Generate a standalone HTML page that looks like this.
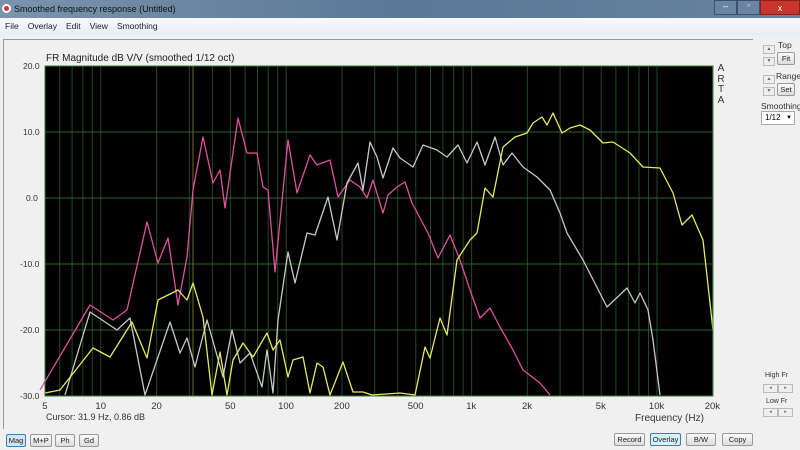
<!DOCTYPE html>
<html><head><meta charset="utf-8"><style>
*{margin:0;padding:0;box-sizing:border-box}
body{width:800px;height:450px;overflow:hidden;background:#f0f0f0;font-family:"Liberation Sans",sans-serif;position:relative}
.abs{position:absolute}
#title{left:0;top:0;width:800px;height:18px;background:linear-gradient(90deg,#7b93ad,#5a7898 50%,#6782a0);font-size:9px;color:#111;line-height:18px;padding-left:14px}
#menu{left:0;top:18px;width:800px;height:17px;background:linear-gradient(#f7f9fc,#e8edf5);font-size:8.5px;line-height:16px;color:#222}
#menu span{margin-left:5px;margin-right:4px}
.btn{position:absolute;height:13px;border:1px solid #999;background:linear-gradient(#fafafa,#ddd);font-size:7.5px;text-align:center;line-height:11px;color:#222;border-radius:2px}
.lbl{position:absolute;font-size:8.5px;color:#333}
.sm{position:absolute;width:12px;height:9px;border:1px solid #bbb;background:#eee;font-size:5px;text-align:center;line-height:7px;color:#666}
</style></head><body>
<div id="title" class="abs">Smoothed frequency response (Untitled)</div>
<div class="abs" style="left:2px;top:4px;width:9px;height:9px;border-radius:50%;background:#d33;border:2px solid #fff"></div>
<div class="abs" style="left:714px;top:0;width:23px;height:15px;background:#6a84a2;border:1px solid #3b526c;color:#fff;font-size:9px;text-align:center">–</div>
<div class="abs" style="left:737px;top:0;width:23px;height:15px;background:#6a84a2;border:1px solid #3b526c;color:#fff;font-size:8px;text-align:center">▫</div>
<div class="abs" style="left:760px;top:0;width:40px;height:15px;background:#c8352a;border:1px solid #8a2018;color:#fff;font-size:9px;text-align:center;line-height:14px">x</div>
<div id="menu" class="abs"><span>File</span><span>Overlay</span><span>Edit</span><span>View</span><span>Smoothing</span></div>
<div class="abs" style="left:3px;top:39px;width:750px;height:390px;border-left:1px solid #999;border-top:1px solid #999"></div>
<div class="lbl" style="left:46px;top:53px;font-size:10px;color:#222">FR Magnitude dB V/V (smoothed 1/12 oct)</div>
<div class="abs" style="left:716px;top:64px;font-size:10px;line-height:10.5px;color:#333;width:10px;text-align:center">A<br>R<br>T<br>A</div>
<div class="lbl" style="left:23px;top:61px">20.0</div>
<div class="lbl" style="left:23px;top:127px">10.0</div>
<div class="lbl" style="left:26px;top:193px">0.0</div>
<div class="lbl" style="left:20px;top:259px">-10.0</div>
<div class="lbl" style="left:20px;top:325px">-20.0</div>
<div class="lbl" style="left:20px;top:391px">-30.0</div>
<div id="xl"></div>
<div class="lbl" style="left:635px;top:413px;font-size:10px">Frequency (Hz)</div>
<div class="lbl" style="left:46px;top:412px;font-size:9px">Cursor: 31.9 Hz, 0.86 dB</div>
<svg class="abs" style="left:0;top:0" width="800" height="450">
<rect x="45" y="66" width="668" height="330" fill="#000"/>
<g id="g"></g>
<line x1="193" y1="66" x2="193" y2="396" stroke="#6b6a2a" stroke-width="1"/>
<g fill="none" stroke-width="1.3" stroke-linejoin="round">
<polyline stroke="#e050a0" points="40,390 90,305 113,320 127,310 147,222 158,263 168,238 178,305 187,257 193,190 203,137 213,183 220,170 225,208 238,118 247,153 257,153 263,187 268,190 275,272 288,140 297,193 310,155 317,165 330,160 338,197 350,180 360,187 367,198 373,180 383,213 388,195 397,187 405,182 412,203 428,233 438,258 450,235 460,260 470,290 480,318 490,308 500,327 513,350 523,370 540,383 550,395"/>
<polyline stroke="#c8c8c8" points="65,395 90,312 117,330 130,318 145,395 170,322 180,353 187,338 195,367 207,320 223,377 232,330 240,363 250,353 262,387 267,350 273,393 278,320 288,252 295,283 307,233 315,235 328,197 337,240 347,183 358,163 363,190 370,142 377,157 383,178 393,148 400,158 413,167 423,145 437,150 447,157 458,145 467,163 477,142 485,165 495,137 503,165 512,153 523,167 537,177 550,190 560,213 567,233 583,260 607,307 627,288 635,303 640,293 648,310 653,340 660,395"/>
<polyline stroke="#e8e860" points="45,393 60,390 93,348 110,357 132,322 147,358 158,300 178,290 187,300 193,283 203,317 212,395 220,352 227,395 233,360 243,343 253,357 267,333 273,350 280,340 288,377 293,360 303,357 310,393 317,363 323,367 330,395 343,362 353,392 363,392 372,395 400,393 415,395 425,347 430,358 440,318 447,335 457,260 470,240 477,233 485,188 493,197 503,147 515,137 527,133 533,123 542,117 547,125 553,113 562,133 570,128 580,125 590,130 603,143 613,142 630,153 643,167 660,168 673,193 682,225 692,215 703,240 713,330"/>
</g>
<rect x="45" y="66" width="668" height="330" fill="none" stroke="#3a7a3a"/>
</svg>
<div class="lbl" style="left:778px;top:40px">Top</div>
<div class="sm" style="left:763px;top:45px">▲</div><div class="sm" style="left:763px;top:57px">▼</div>
<div class="btn" style="left:777px;top:52px;width:18px">Fit</div>
<div class="lbl" style="left:776px;top:71px">Range</div>
<div class="sm" style="left:763px;top:75px">▲</div><div class="sm" style="left:763px;top:87px">▼</div>
<div class="btn" style="left:777px;top:83px;width:18px">Set</div>
<div class="lbl" style="left:761px;top:101px">Smoothing</div>
<div class="abs" style="left:761px;top:111px;width:34px;height:14px;border:1px solid #aaa;background:#fff;font-size:8px;line-height:12px;padding-left:3px">1/12 <span style="float:right;font-size:6px;margin-right:2px">▼</span></div>
<div class="lbl" style="left:765px;top:372px;font-size:7px">High Fr</div>
<div class="sm" style="left:763px;top:384px;width:15px">◂</div><div class="sm" style="left:778px;top:384px;width:15px">▸</div>
<div class="lbl" style="left:766px;top:398px;font-size:7px">Low Fr</div>
<div class="sm" style="left:763px;top:408px;width:15px">◂</div><div class="sm" style="left:778px;top:408px;width:15px">▸</div>
<div class="btn" style="left:6px;top:434px;width:20px;background:#cfe6f8;border-color:#3c7fb1">Mag</div>
<div class="btn" style="left:30px;top:434px;width:22px">M+P</div>
<div class="btn" style="left:55px;top:434px;width:20px">Ph</div>
<div class="btn" style="left:79px;top:434px;width:20px">Gd</div>
<div class="btn" style="left:614px;top:433px;width:31px">Record</div>
<div class="btn" style="left:650px;top:433px;width:31px;background:#dbeefb;border-color:#3c7fb1">Overlay</div>
<div class="btn" style="left:686px;top:433px;width:30px">B/W</div>
<div class="btn" style="left:722px;top:433px;width:31px">Copy</div>
<script>
var g=document.getElementById('g'),s='',xl='';
function X(f){return 45+185.4*Math.log10(f/5);}
var fs=[];
[1,10,100,1000,10000].forEach(function(d){for(var m=1;m<10;m++){var f=m*d;if(f>=5&&f<=20000)fs.push(f);}});
fs.push(20000);
fs.forEach(function(f){var x=X(f).toFixed(1);s+='<line x1="'+x+'" y1="66" x2="'+x+'" y2="396" stroke="#1e4a1e"/>';});
for(var i=1;i<5;i++){var y=66+66*i;s+='<line x1="45" y1="'+y+'" x2="713" y2="'+y+'" stroke="#2d642d"/>';}
g.innerHTML=s;
[[5,'5'],[10,'10'],[20,'20'],[50,'50'],[100,'100'],[200,'200'],[500,'500'],[1000,'1k'],[2000,'2k'],[5000,'5k'],[10000,'10k'],[20000,'20k']].forEach(function(a){
xl+='<div class="lbl" style="top:401px;font-size:9.5px;left:'+(X(a[0])-a[1].length*2.7)+'px">'+a[1]+'</div>';});
document.getElementById('xl').innerHTML=xl;
</script>
</body></html>
